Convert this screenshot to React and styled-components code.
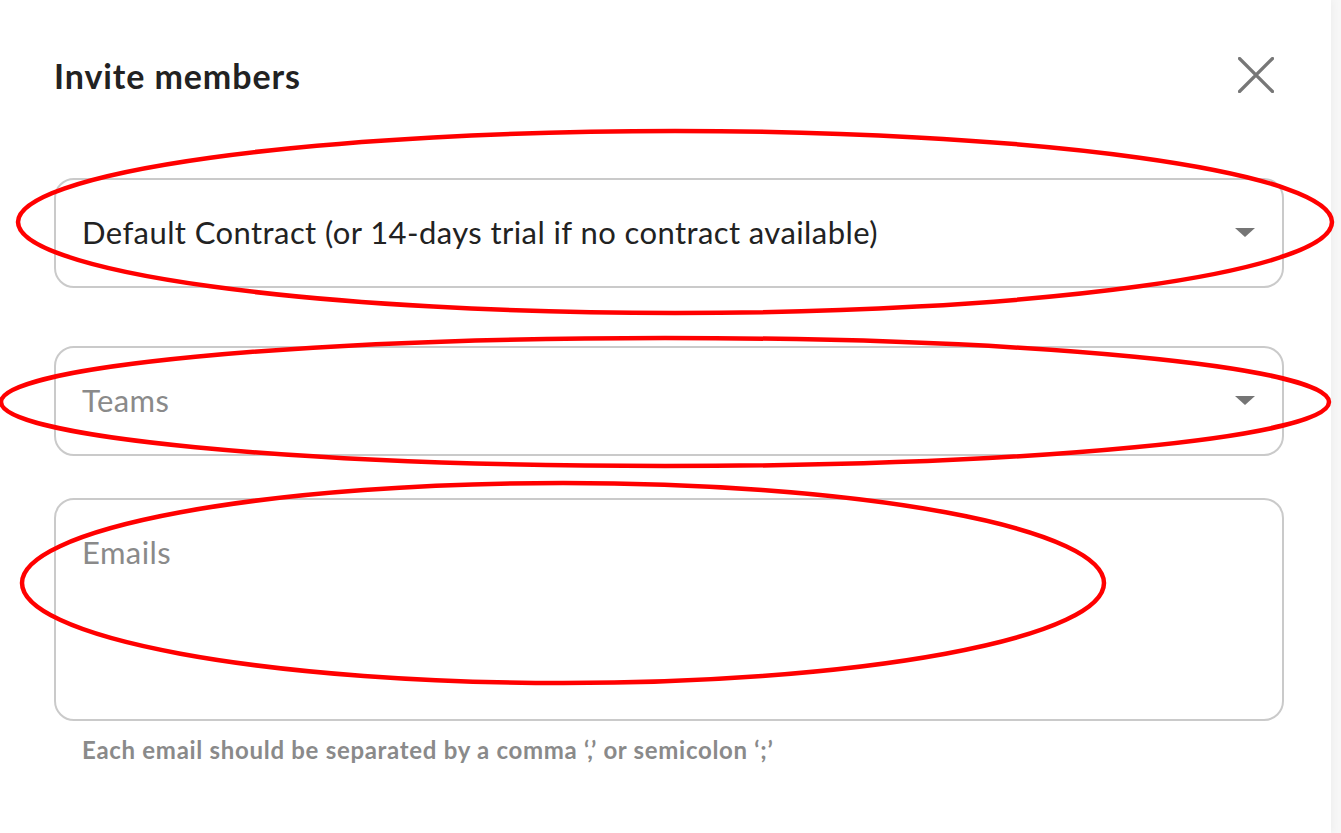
import React from 'react';
import styled, { createGlobalStyle } from 'styled-components';

const GlobalStyle = createGlobalStyle`
    html, body {
        margin: 0;
        padding: 0;
        background: #f7f7f7;
        font-family: Lato, "Open Sans", "Liberation Sans", sans-serif;
    }
`;

const Page = styled.div`
    position: relative;
    width: 100%;
    height: 833px;
    overflow: hidden;
`;

const Modal = styled.div`
    width: 1331px;
    height: 100%;
    background: #fff;
    box-shadow: 2px 0 8px rgba(0, 0, 0, 0.04);
    padding: 56px 57px 0 54px;
    box-sizing: border-box;
`;

const Header = styled.div`
    display: flex;
    align-items: flex-start;
    justify-content: space-between;
`;

const Title = styled.h1`
    margin: 0;
    font-size: 34px;
    line-height: 1.2;
    letter-spacing: 0.9px;
    font-weight: 700;
    color: #222;
`;

const CloseButton = styled.button`
    width: 36px;
    height: 36px;
    margin-top: 1px;
    padding: 0;
    border: none;
    background: none;
    cursor: pointer;
    display: flex;
`;

const Form = styled.form`
    display: flex;
    flex-direction: column;
    margin-top: 81px;
    width: 1230px;
`;

const Field = styled.div`
    box-sizing: border-box;
    height: ${p => p.$h}px;
    margin-bottom: ${p => p.$mb || 0}px;
    border: 2px solid #cacaca;
    border-radius: 20px;
    display: flex;
    align-items: ${p => (p.$top ? 'flex-start' : 'center')};
    justify-content: space-between;
    padding: ${p => (p.$top ? '34px 26px' : '0 26px')};
`;

const Value = styled.span`
    font-size: 31px;
    line-height: 1.2;
    letter-spacing: 0.42px;
    color: ${p => (p.$placeholder ? '#8a8a8a' : '#222')};
`;

const Caret = styled.span`
    width: 0;
    height: 0;
    border-left: 10px solid transparent;
    border-right: 10px solid transparent;
    border-top: 9px solid #757575;
    margin-right: 1px;
`;

const Hint = styled.p`
    margin: 15px 0 0 28px;
    font-size: 24px;
    line-height: 1.2;
    letter-spacing: 0.7px;
    font-weight: 700;
    color: #8a8a8a;
`;

const Marks = styled.svg`
    position: absolute;
    inset: 0;
    pointer-events: none;
`;

const Select = ({ label, placeholder, mb }) => (
    <Field $h={110} $mb={mb}>
        <Value $placeholder={placeholder}>{label}</Value>
        <Caret />
    </Field>
);

const App = () => {
    return (
        <Page>
            <GlobalStyle />
            <Modal>
                <Header>
                    <Title>Invite members</Title>
                    <CloseButton aria-label="Close">
                        <svg width="36" height="36" viewBox="0 0 36 36">
                            <path d="M1.5 1.5 L34.5 34.5 M34.5 1.5 L1.5 34.5" stroke="#777" strokeWidth="3.2" strokeLinecap="round" />
                        </svg>
                    </CloseButton>
                </Header>
                <Form>
                    <Select label="Default Contract (or 14-days trial if no contract available)" mb={58} />
                    <Select label="Teams" placeholder mb={42} />
                    <Field $h={223} $top>
                        <Value $placeholder>Emails</Value>
                    </Field>
                    <Hint>Each email should be separated by a comma ‘,’ or semicolon ‘;’</Hint>
                </Form>
            </Modal>
            <Marks width="1341" height="833" viewBox="0 0 1341 833">
                <g fill="none" stroke="#ff0000" strokeWidth="4.5">
                    <ellipse cx="675" cy="222" rx="657" ry="91" />
                    <ellipse cx="665" cy="402" rx="664" ry="64" />
                    <ellipse cx="563" cy="583" rx="541" ry="100" />
                </g>
            </Marks>
        </Page>
    );
};

export default App;
